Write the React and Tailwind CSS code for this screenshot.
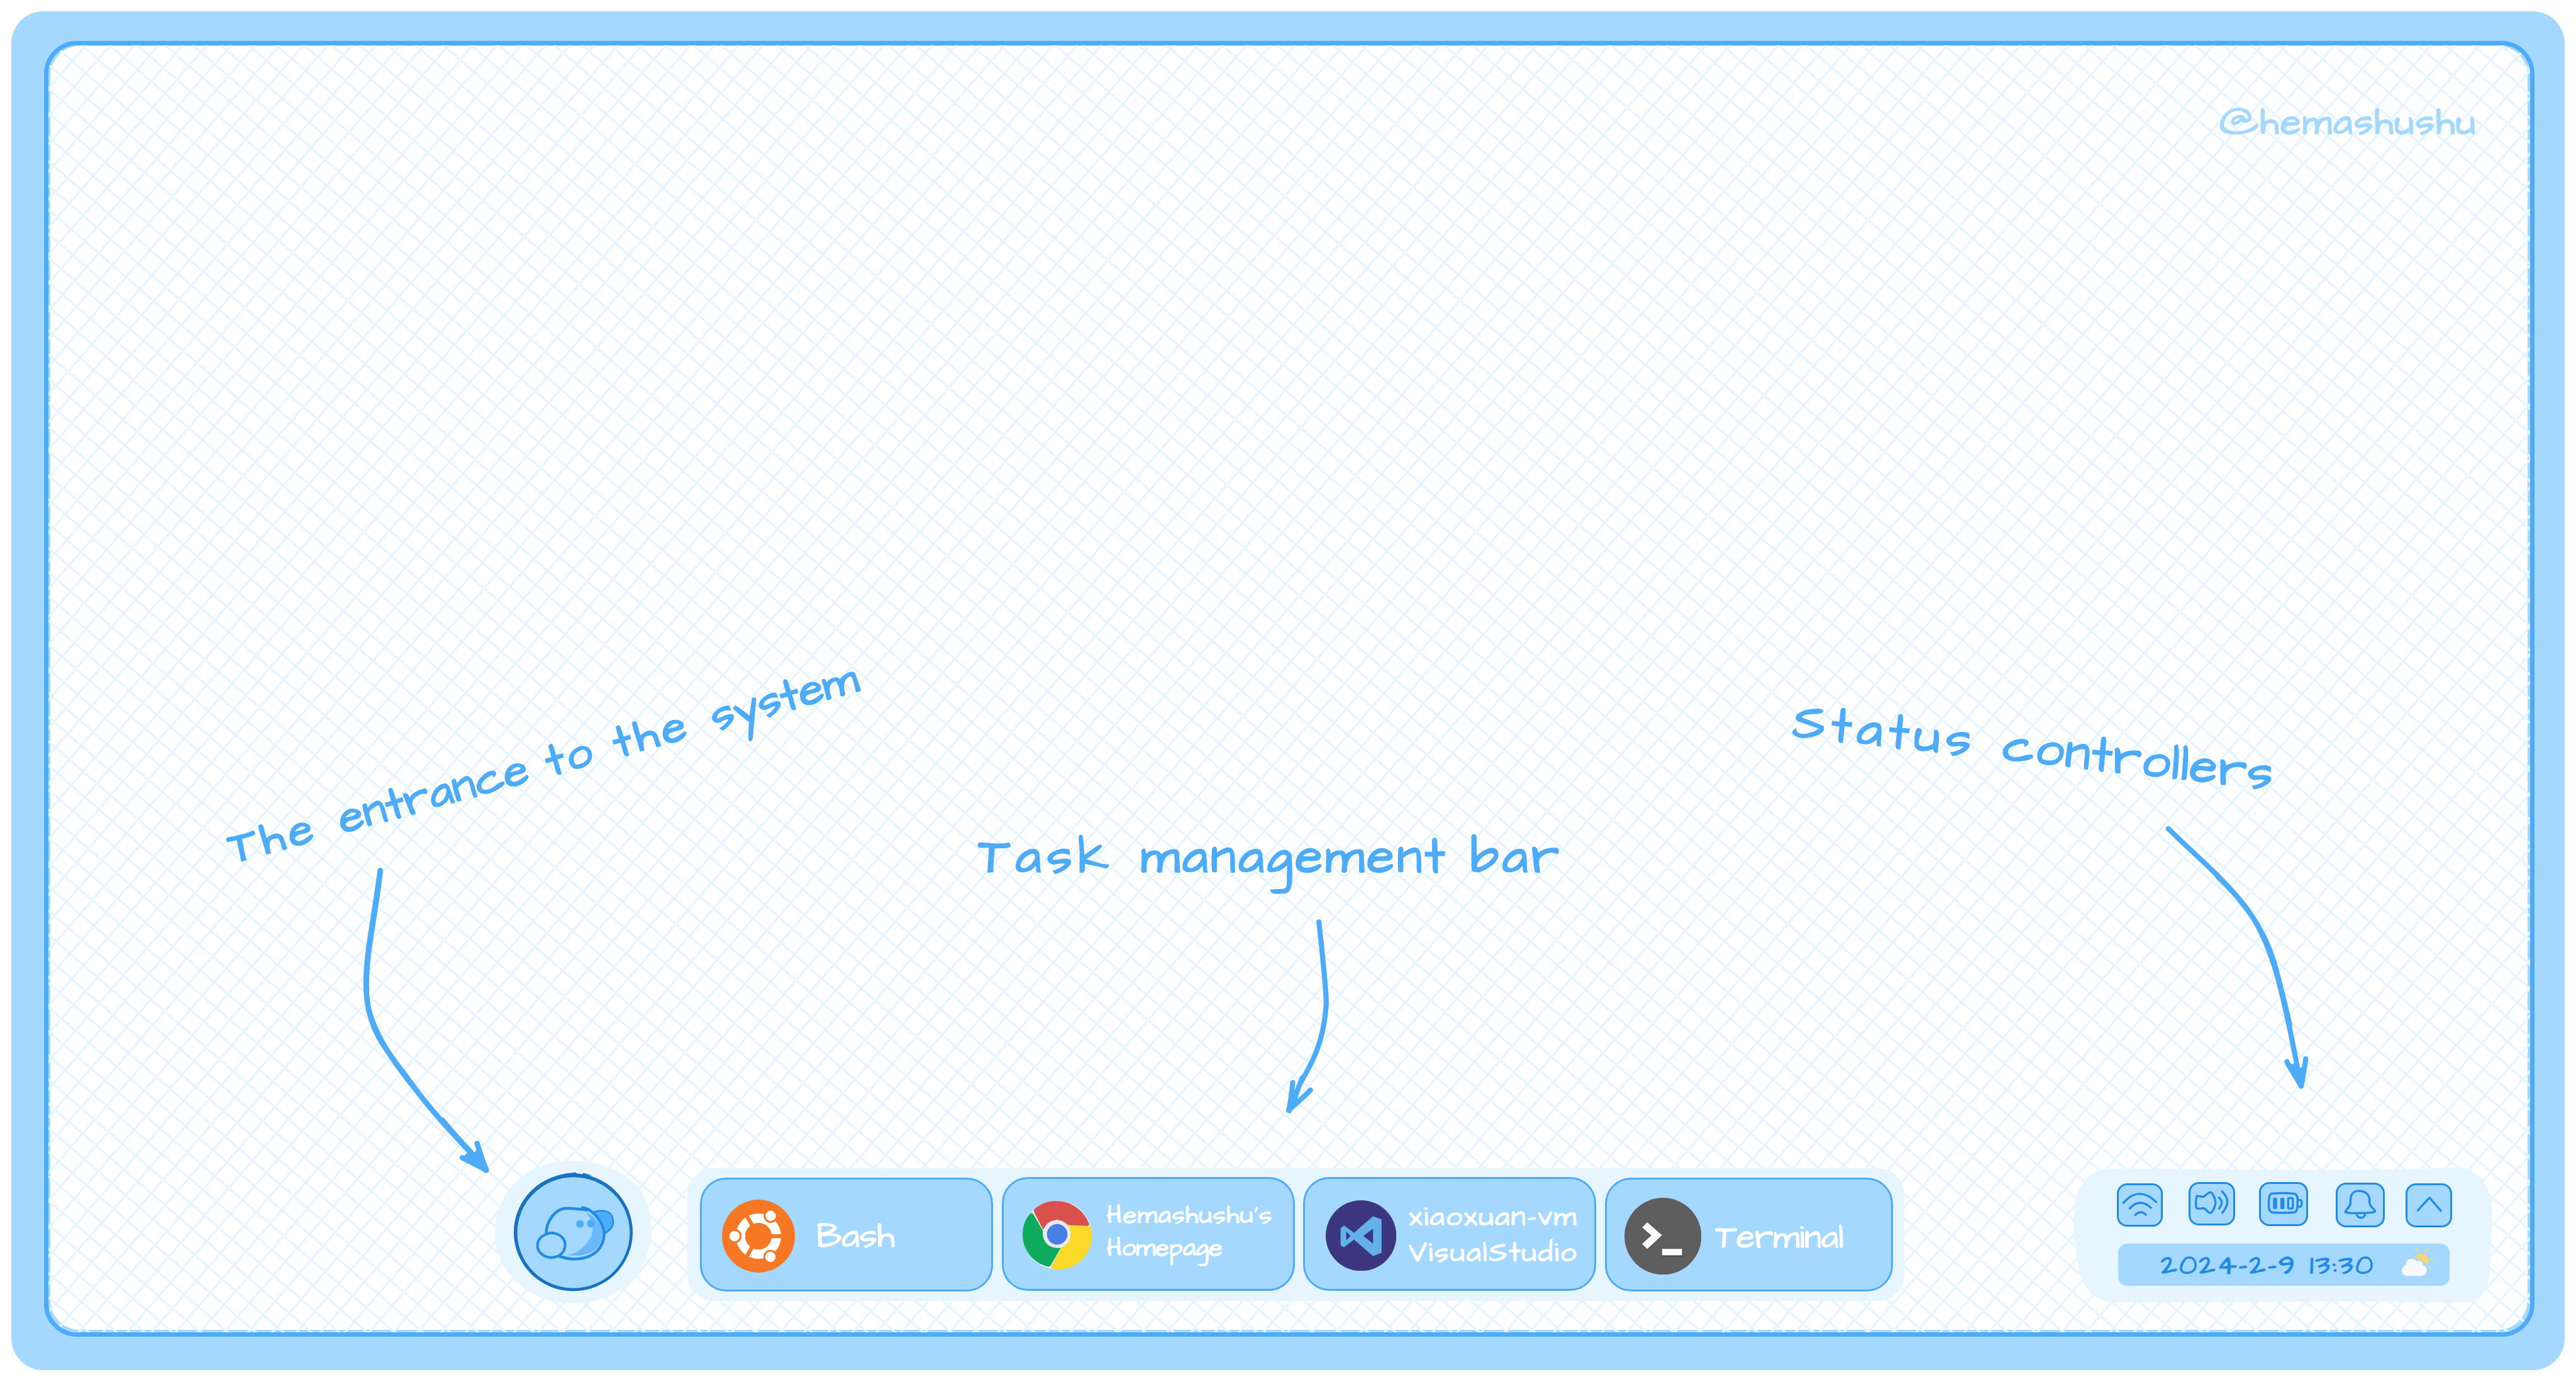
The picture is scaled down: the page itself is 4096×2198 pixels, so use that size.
const hand = "font-['Architects_Daughter','Comic_Neue',Inter,sans-serif] whitespace-nowrap";

function Hatch() {
  return (
    <svg className="absolute left-0 top-0 h-[2258px] w-[4353px]" viewBox="0 0 4353 2258" aria-hidden="true">
      <defs>
        <pattern id="hatch" width="32" height="32" patternUnits="userSpaceOnUse" patternTransform="translate(43.4 50.3) rotate(41)">
          <path d="M-1 16H33M16 -1V33" stroke="#e7f5ff" strokeWidth="4" fill="none" />
        </pattern>
      </defs>
      <rect width="4353" height="2258" fill="url(#hatch)" />
    </svg>
  );
}

function Mascot() {
  return (
    <svg className="h-[250px] w-[275px] shrink-0" viewBox="24 53 824 750" fill="none" strokeLinecap="round" strokeLinejoin="round">
      <path d="M436 53C560 55 690 98 765 180C812 230 849 320 848 430C846 500 820 580 780 632C700 745 580 803 440 803C310 803 190 755 115 668C60 610 24 525 24 425C25 320 70 220 150 150C225 85 330 53 436 53Z" fill="#e7f5ff" />
      <ellipse cx="435.500" cy="430" rx="313" ry="310" fill="#1971c2" />
      <path d="M350 132L400 120L450 114L456 124L486 125L488 117L535 131Z" fill="#1971c2" />
      <ellipse cx="437" cy="432" rx="296" ry="292" fill="#a5d8ff" />
      <path d="M545 322C580 312 625 312 640 345C652 380 650 405 605 434Z" fill="#4dabf7" stroke="#228be6" strokeWidth="8" />
      <path d="M505 315C470 307 430 304 395 304C335 315 294 370 294 435C270 520 330 572 440 571C520 568 570 535 598 465C608 420 560 330 505 308Z" fill="#a5d8ff" />
      <path d="M503 325C560 350 590 400 588 445C580 530 500 567 395 548C450 552 500 505 528 455C550 410 535 370 503 325Z" fill="#69b8fb" />
      <path d="M586 480C570 510 550 535 535 542C558 522 572 505 586 480Z" fill="#a5d8ff" />
      <path d="M294 435C292 370 345 304 400 304C440 304 470 308 510 313M484 300C530 303 580 360 596 420C604 470 580 510 560 530C510 576 430 580 362 556" stroke="#228be6" strokeWidth="15" />
      <path d="M325 433C370 438 393 465 393 498C390 540 360 562 318 563C275 560 247 532 247 497C249 462 280 436 325 433Z" fill="#a5d8ff" stroke="#228be6" strokeWidth="14" />
      <circle cx="471" cy="386" r="20.5" fill="#4dabf7" />
      <circle cx="528" cy="384" r="20.5" fill="#4dabf7" />
    </svg>
  );
}

function UbuntuIcon() {
  return (
    <svg className="mt-1.5 h-32 w-32" viewBox="-64 -64 128 128">
      <circle r="64" fill="#f67824" />
      <circle r="31.5" fill="none" stroke="#fff" strokeWidth="16.5" />
      <path d="M0 0H44M0 0L-22 -38.1M0 0L-22 38.1" stroke="#f67824" strokeWidth="7" />
      <circle r="23.2" fill="#f67824" />
      <g fill="#fff" stroke="#f67824" strokeWidth="3.4">
        <circle cx="-42" cy="0" r="10.8" />
        <circle cx="21.4" cy="-35.6" r="10.8" />
        <circle cx="21" cy="36.4" r="10.8" />
      </g>
    </svg>
  );
}

function ChromeIcon() {
  return (
    <svg className="mt-1 h-[122px] w-[122px]" viewBox="45 86 366 364">
      <circle cx="228" cy="268" r="181" fill="#e8eaed" />
      <path d="M106 134C150 92 210 78 275 96C335 116 378 160 395 210Q396 219 385 220L285 216L226 186L152 238L107 150Q103 140 106 134Z" fill="#d8524b" />
      <path d="M88 153Q96 151 101 158L152 245C150 300 190 336 246 336L193 427Q188 436 178 434C100 415 45 345 45 268C45 220 60 180 88 153Z" fill="#0eab5f" />
      <path d="M283 216L395 222Q404 222 406 230C420 290 402 350 362 394C320 438 260 456 204 446Q192 442 196 432L248 336C290 318 310 270 283 216Z" fill="#fbd928" />
      <circle cx="225" cy="262" r="73.5" fill="#e8eaed" />
      <circle cx="227" cy="264" r="54" fill="#4a7ee4" />
    </svg>
  );
}

function VisualStudioIcon() {
  return (
    <svg className="mt-1.5 h-[124px] w-[124px]" viewBox="0 0 124 124">
      <circle cx="62" cy="62" r="62" fill="#3c3680" />
      <path fillRule="evenodd" fill="#62b1e8" d="M26 49L32 44L49.500 57L83 28L98 33.500V92L83 98L49.500 69L32 82.500L26 79ZM36 55V70L43.500 62.500ZM66 62.500L83 76V50Z" />
    </svg>
  );
}

function TerminalIcon() {
  return (
    <svg className="mt-1.5 h-[135px] w-[135px]" viewBox="0 0 135 135">
      <circle cx="67.500" cy="67.500" r="67.500" fill="#5e5e5e" />
      <path d="M40 45L67 67L41 91L32 83L48 67L32 53Z" fill="#484848" />
      <path d="M66 91H102V103H66Z" fill="#484848" />
      <path d="M40 43L66 66L40 90L31 81L47 66L31 52Z" fill="#fafafa" />
      <path d="M66 89.500H101V101H66Z" fill="#fafafa" />
    </svg>
  );
}

function Task({ className, icon, children }) {
  return (
    <div className={`flex h-[199px] items-center rounded-[46px] border-4 border-[#4dabf7] bg-[#a5d8ff] text-white [-webkit-text-stroke:1.5px_#fff] ${className}`}>
      {icon}
      {children}
    </div>
  );
}

function TrayButton({ className, viewBox, children }) {
  return (
    <button className={`flex items-center justify-center rounded-[18px] border-4 border-[#228be6] bg-[#a5d8ff] ${className}`}>
      <svg className="h-full w-full" viewBox={viewBox} fill="none" stroke="#228be6" strokeWidth="11" strokeLinecap="round" strokeLinejoin="round">
        {children}
      </svg>
    </button>
  );
}

function Tray() {
  return (
    <div className="relative ml-[297px] mt-3 h-[236px] w-[733px]">
      <svg className="absolute inset-0 h-full w-full" viewBox="0 0 733 236" aria-hidden="true">
        <path d="M58 2C230 2 460 8 675 0C705 -1 731 28 733 70C735 110 731 150 730 190C726 215 708 236 680 237C500 233 300 236 72 237C30 234 14 205 8 170C2 140 -2 110 2 64C6 32 30 4 58 2Z" fill="#e7f5ff" />
      </svg>
      <div className="relative flex items-start pl-[76px] pt-[25px]">
        <TrayButton className="mt-[3px] h-[76px] w-[81px]" viewBox="78 66 219 204">
          <path d="M102 157C130 125 155 110 187 110C220 112 245 126 271 153M134 187C150 168 170 157 190 157C212 158 228 167 244 183M163 220C180 202 200 200 218 218" />
        </TrayButton>
        <TrayButton className="ml-[45px] h-[76px] w-[81px]" viewBox="457 57 219 204">
          <path d="M490 119C510 118 518 128 528 121C540 112 548 102 557 100C565 98 572 108 578 122C590 150 588 160 580 180C570 205 562 208 556 207C545 202 540 190 525 182C510 182 495 190 487 181C483 160 485 140 490 119ZM604 127C622 142 624 158 605 184M620 96C655 130 658 160 622 206" />
        </TrayButton>
        <TrayButton className="ml-[42px] h-[78px] w-[86px]" viewBox="826 57 234 210">
          <path d="M880 107C920 103 960 103 998 107C1015 112 1018 130 1015 155C1016 185 1012 200 1000 204C960 206 920 207 885 204C865 198 866 180 867 157C867 130 868 112 880 107ZM1018 140H1030C1040 145 1040 168 1030 174H1016" />
          <path d="M894 134H904V181H894ZM932 134H942V181H932Z" fill="#228be6" />
          <rect x="967" y="130" width="24" height="54" rx="6" />
        </TrayButton>
        <TrayButton className="ml-[49px] mt-[2px] h-[78px] w-[86px]" viewBox="120 63 233 210">
          <path d="M160 206C155 195 180 190 186 160C186 130 185 95 233 95C275 100 286 125 284 150C283 185 315 190 313 202C300 212 180 212 160 206ZM218 214C222 240 258 242 262 214" />
        </TrayButton>
        <TrayButton className="ml-[37px] mt-[3px] h-[77px] w-[81px]" viewBox="488 67 219 206">
          <path d="M542 196L602 131L661 199" />
        </TrayButton>
      </div>
      <div className="relative ml-[78px] mt-[28px] flex h-[75px] w-[582px] items-center justify-between rounded-2xl bg-[#a5d8ff] pl-[75px] pr-[26px]">
        <span className={`${hand} mt-[2px] text-[50px] leading-[50px] tracking-[3.4px] text-[#228be6] [-webkit-text-stroke:1.5px_#228be6]`}>2024-2-9 13:30</span>
        <svg className="mb-2.5 h-[52px] w-[58px]" viewBox="454 390 174 156">
          <g fill="#f3d77b">
            <path d="M527 392L544 413L529 418ZM592 395L588 424L571 416ZM484 433L511 432L496 443ZM603 447L629 452L606 461ZM597 489L613 511L597 506Z" />
            <path d="M523 441C540 422 570 420 584 437C598 454 594 475 586 484C580 480 575 472 562 467C550 463 540 455 523 441Z" />
          </g>
          <path d="M476 486C474 462 495 450 512 454C522 457 528 462 532 467C550 460 565 468 565 487C580 492 586 502 585 516C584 535 570 543 555 543H487C465 543 454 530 454 513C455 497 465 489 476 486Z" fill="#f8f9fa" />
        </svg>
      </div>
    </div>
  );
}

function Arrow({ className, viewBox, d, width }) {
  return (
    <svg className={`absolute ${className}`} viewBox={viewBox} fill="none" stroke="#4dabf7" strokeWidth={width} strokeLinecap="round" strokeLinejoin="round">
      <path d={d} />
    </svg>
  );
}

function Annotations() {
  return (
    <div className={`${hand} leading-[110px] text-[#4dabf7] [-webkit-text-stroke:2.5px_#4dabf7]`}>
      <p className="absolute left-[409px] top-[1436px] origin-[0_78px] -rotate-[15.4deg] text-[80px]">
        <span className="tracking-[8.4px]">The </span>
        <span className="tracking-[1.2px]">entrance </span>
        <span className="tracking-[4.4px]">to </span>
        <span className="tracking-[7.7px]">the </span>
        <span className="tracking-[0.6px]">system</span>
      </p>
      <p className="absolute left-[1716px] top-[1449px] text-[88px]">
        <span className="tracking-[10.3px]">Task </span>
        <span className="tracking-[4.8px]">management </span>
        <span className="tracking-[6.3px]">bar</span>
      </p>
      <p className="absolute left-[3142px] top-[1211px] origin-[0_81px] rotate-[6.3deg] text-[88px]">
        <span className="tracking-[10.5px]">Status </span>
        <span className="tracking-[2.5px]">controllers</span>
      </p>
      <Arrow className="left-[620px] top-[1510px] h-[560px] w-[250px]" viewBox="620 1510 250 560" width="9.500"
        d="M667 1527C655 1620 638 1690 643 1745C648 1810 680 1845 715 1892C760 1955 810 2005 853 2051M667 1530C658 1610 640 1680 643 1740M646 1770C662 1825 690 1860 720 1900M776 1965C800 1995 828 2023 852 2050M811 2031C825 2038 840 2045 853 2053C846 2035 841 2020 837 2006M820 2028L850 2048L838 2022" />
      <Arrow className="left-[2240px] top-[1600px] h-[370px] w-[110px]" viewBox="2240 1600 110 370" width="9"
        d="M2313 1617C2320 1680 2325 1730 2326 1760C2322 1830 2298 1870 2280 1900C2272 1920 2266 1935 2261 1948M2267 1899C2265 1920 2263 1935 2260 1947C2275 1934 2288 1923 2298 1912M2270 1925L2266 1940M2284 1890C2276 1908 2272 1925 2266 1938" />
      <Arrow className="left-[3790px] top-[1440px] h-[475px] w-[270px]" viewBox="3790 1440 270 475" width="9"
        d="M3803 1453C3850 1500 3900 1540 3938 1590C3985 1650 4005 1740 4035 1902M3890 1538C3940 1585 3975 1635 3992 1700C4002 1738 4010 1770 4016 1798M4011 1862C4018 1876 4028 1890 4036 1905C4040 1885 4042 1870 4044 1857M4022 1870L4034 1896L4038 1876" />
    </div>
  );
}

export default function App() {
  return (
    <div className="relative h-[2424px] w-[4518px] overflow-hidden bg-white p-5 [zoom:0.9066]">
      <div className="h-[2384px] w-[4478px] rounded-[56px] bg-[#a5d8ff] pl-[57px] pt-[52px]">
        <div className="relative flex h-[2273px] w-[4368px] flex-col overflow-hidden rounded-[58px] border-8 border-[#4dabf7]">
          <div className="absolute bottom-1 left-[3px] right-1 top-px rounded-[52px] bg-white" />
          <Hatch />
          <header className="relative flex flex-1 items-start justify-end pr-[93px] pt-[91px]">
            <span className={`${hand} text-[66px] leading-[90px] tracking-[2.8px] text-[#a5d8ff] [-webkit-text-stroke:2px_#a5d8ff]`}>@hemashushu</span>
          </header>
          <footer className="relative flex h-[301px] items-start pl-[783px]">
            <Mascot />
            <nav className="ml-[63px] mt-[13px] flex h-[233px] w-[2134px] items-start gap-[15px] rounded-[46px] bg-[#e7f5ff] pl-[22px] pt-4">
              <Task className="mt-px w-[514px] gap-[38px] pl-[35px]" icon={<UbuntuIcon />}>
                <span className={`${hand} pt-2 text-[62px] leading-none`}>Bash</span>
              </Task>
              <Task className="w-[514px] gap-[25px] pl-[34px]" icon={<ChromeIcon />}>
                <span className={`${hand} pb-1.5 text-[44px] leading-[57px]`}>
                  <span className="tracking-[1.9px]">Hemashushu's</span><br />Homepage
                </span>
              </Task>
              <Task className="w-[514px] gap-[22px] pl-[36px]" icon={<VisualStudioIcon />}>
                <span className={`${hand} pt-[3px] text-[50px] leading-[63px] tracking-[2.9px]`}>xiaoxuan-vm<br />VisualStudio</span>
              </Task>
              <Task className="mt-px w-[506px] gap-[25px] pl-[31px]" icon={<TerminalIcon />}>
                <span className={`${hand} pt-3 text-[59px] leading-none`}>Terminal</span>
              </Task>
            </nav>
            <Tray />
          </footer>
        </div>
      </div>
      <Annotations />
    </div>
  );
}
